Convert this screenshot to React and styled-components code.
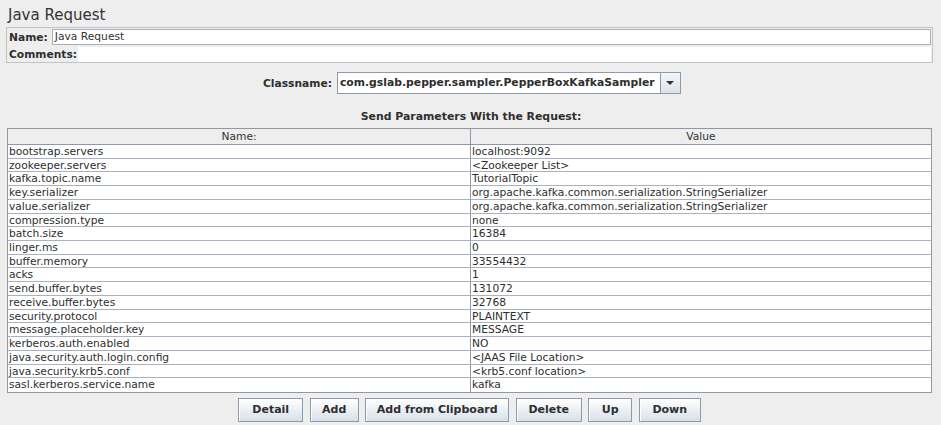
import styled, { createGlobalStyle } from 'styled-components';

const GlobalStyle = createGlobalStyle`
  html, body {
    margin: 0;
    padding: 0;
    background: #eeeeee;
  }
  body {
    font-family: "DejaVu Sans", "Liberation Sans", sans-serif;
    color: #333333;
  }
`;

const Page = styled.div`
  width: 941px;
  height: 425px;
  overflow: hidden;
  display: flex;
  flex-direction: column;
`;

const Title = styled.div`
  height: 27px;
  padding: 6px 0 0 8px;
  box-sizing: border-box;
  font-size: 15px;
  line-height: 18px;
  color: #333;
`;

const NameBox = styled.div`
  margin: 0 8px 0 6px;
  border: 1px solid #c4c4c4;
  height: 36px;
  box-sizing: border-box;
  padding: 1px 1px 0 2px;
  display: flex;
  flex-direction: column;
  gap: 2px;
`;

const FieldRow = styled.div`
  display: flex;
  align-items: center;
  height: ${(p) => p.h}px;
`;

const Label = styled.span`
  font-weight: bold;
  font-size: 10.7px;
  color: #2e2e2e;
  padding-right: ${(p) => p.pr ?? 4}px;
  white-space: nowrap;
`;

const TextField = styled.div`
  flex: 1;
  height: 16px;
  box-sizing: border-box;
  background: #fff;
  border: 1px solid #a3b0bf;
  font-size: 10.7px;
  line-height: 14px;
  padding-left: 2px;
  color: #333;
`;

const TextArea = styled.div`
  flex: 1;
  height: 15px;
  background: #fff;
`;

const ClassRow = styled.div`
  margin-top: 9px;
  display: flex;
  justify-content: center;
  align-items: center;
  gap: 5px;
  padding-left: 3px;
`;

const Combo = styled.div`
  width: 344px;
  height: 22px;
  box-sizing: border-box;
  border: 1px solid #8c9aab;
  background: #fff;
  display: flex;
  align-items: stretch;
`;

const ComboText = styled.div`
  flex: 1;
  font-weight: bold;
  font-size: 10.8px;
  line-height: 20px;
  padding-left: 2px;
  color: #2e2e2e;
  white-space: nowrap;
  overflow: hidden;
`;

const ComboButton = styled.div`
  width: 19px;
  border-left: 1px solid #8c9aab;
  background: linear-gradient(#f4f6f9, #dde3ea);
  display: flex;
  align-items: center;
  justify-content: center;
`;

const SectionTitle = styled.div`
  margin-top: 16px;
  text-align: center;
  font-weight: bold;
  font-size: 10.9px;
  line-height: 14px;
  padding-left: 1px;
  color: #2e2e2e;
`;

const Table = styled.div`
  margin: 4px 0 0 7px;
  width: 925px;
  border: 1px solid #8e99a6;
  box-sizing: border-box;
  background: #fff;
`;

const HeaderRow = styled.div`
  display: grid;
  grid-template-columns: 462px 1fr;
  height: 15px;
  background: #eeeeee;
  border-bottom: 1px solid #8e99a6;
  box-sizing: content-box;
`;

const HeaderCell = styled.div`
  font-size: 10.7px;
  line-height: 15px;
  text-align: center;
  color: #333;
  border-left: ${(p) => (p.first ? 'none' : '1px solid #8e99a6')};
`;

const Row = styled.div`
  display: grid;
  grid-template-columns: 462px 1fr;
  height: 13.72px;
  box-sizing: border-box;
  border-bottom: ${(p) => (p.last ? 'none' : '1px solid #a9b3bf')};
`;

const Cell = styled.div`
  font-size: 10.7px;
  line-height: 13.5px;
  padding-left: 1px;
  color: #2e2e2e;
  white-space: nowrap;
  overflow: hidden;
  border-left: ${(p) => (p.first ? 'none' : '1px solid #8e99a6')};
`;

const ButtonBar = styled.div`
  margin-top: 5px;
  display: flex;
  justify-content: center;
  gap: 6.5px;
  padding-right: 2px;
`;

const Button = styled.button`
  height: 24px;
  width: ${(p) => p.w}px;
  box-sizing: border-box;
  border: 1px solid #8c9aab;
  border-radius: 0;
  background: linear-gradient(#ffffff, #d8e0ea);
  font-family: "DejaVu Sans", sans-serif;
  font-weight: bold;
  font-size: 11px;
  color: #2e2e2e;
  padding: 0;
  box-shadow: inset 1px 1px 0 #fff;
`;

const params = [
  ['bootstrap.servers', 'localhost:9092'],
  ['zookeeper.servers', '<Zookeeper List>'],
  ['kafka.topic.name', 'TutorialTopic'],
  ['key.serializer', 'org.apache.kafka.common.serialization.StringSerializer'],
  ['value.serializer', 'org.apache.kafka.common.serialization.StringSerializer'],
  ['compression.type', 'none'],
  ['batch.size', '16384'],
  ['linger.ms', '0'],
  ['buffer.memory', '33554432'],
  ['acks', '1'],
  ['send.buffer.bytes', '131072'],
  ['receive.buffer.bytes', '32768'],
  ['security.protocol', 'PLAINTEXT'],
  ['message.placeholder.key', 'MESSAGE'],
  ['kerberos.auth.enabled', 'NO'],
  ['java.security.auth.login.config', '<JAAS File Location>'],
  ['java.security.krb5.conf', '<krb5.conf location>'],
  ['sasl.kerberos.service.name', 'kafka'],
];

const buttons = [
  ['Detail', 65],
  ['Add', 49],
  ['Add from Clipboard', 144],
  ['Delete', 66],
  ['Up', 44],
  ['Down', 62],
];

const App = () => {
  return (
    <Page>
      <GlobalStyle />
      <Title>Java Request</Title>
      <NameBox>
        <FieldRow h={16}>
          <Label>Name:</Label>
          <TextField>Java Request</TextField>
        </FieldRow>
        <FieldRow h={15}>
          <Label pr={1}>Comments:</Label>
          <TextArea />
        </FieldRow>
      </NameBox>

      <ClassRow>
        <Label pr={0}>Classname:</Label>
        <Combo>
          <ComboText>com.gslab.pepper.sampler.PepperBoxKafkaSampler</ComboText>
          <ComboButton>
            <svg width="8" height="5" viewBox="0 0 8 5">
              <path d="M0 0h8L4 4z" fill="#333" />
            </svg>
          </ComboButton>
        </Combo>
      </ClassRow>

      <SectionTitle>Send Parameters With the Request:</SectionTitle>

      <Table>
        <HeaderRow>
          <HeaderCell first>Name:</HeaderCell>
          <HeaderCell>Value</HeaderCell>
        </HeaderRow>
        {params.map(([name, value], i) => (
          <Row key={name} last={i === params.length - 1}>
            <Cell first>{name}</Cell>
            <Cell>{value}</Cell>
          </Row>
        ))}
      </Table>

      <ButtonBar>
        {buttons.map(([label, w]) => (
          <Button key={label} w={w}>
            {label}
          </Button>
        ))}
      </ButtonBar>
    </Page>
  );
};

export default App;
